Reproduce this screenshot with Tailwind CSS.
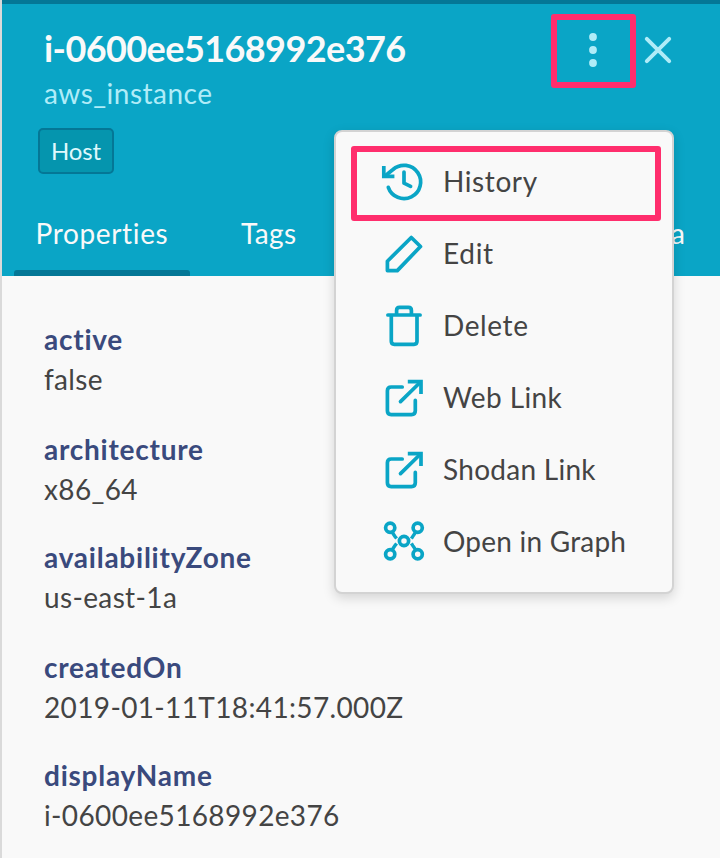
<!DOCTYPE html>
<html lang="en">
<head>
<meta charset="utf-8">
<title>aws_instance</title>
<script src="https://cdn.jsdelivr.net/npm/@tailwindcss/browser@4"></script>
</head>
<body class="w-[720px] h-[858px] overflow-hidden bg-[#f9f9f9] font-['Lato',sans-serif] text-[28px] leading-[40px] tracking-[0.36px] text-[#444]">
<div class="relative h-[858px] border-l-2 border-[#dadada] flex flex-col">
  <header class="h-[276px] shrink-0 bg-[#0aa5c6] border-t-4 border-[#047796] flex flex-col">
    <div class="h-[120px] flex justify-between pl-[42px] pr-[48px] pt-[22px]">
      <div>
        <h1 class="text-[36px] leading-[44px] tracking-[-0.58px] font-bold text-[#f9f9f9]">i-0600ee5168992e376</h1>
        <p class="mt-px leading-[44px] tracking-[0.48px] text-[#b0ecf8]">aws_instance</p>
      </div>
      <div class="flex gap-[45px] items-start pt-[8px]">
        <svg class="w-[12px] h-[36px] mt-[-2px]" viewBox="0 0 12 36" fill="#b0ecf8"><circle cx="6" cy="5" r="3.9"/><circle cx="6" cy="18" r="3.9"/><circle cx="6" cy="31" r="3.9"/></svg>
        <svg class="w-[28px] h-[28px] mt-[2px]" viewBox="0 0 28 28" fill="none" stroke="#b0ecf8" stroke-width="3.9" stroke-linecap="round"><path d="M2.8 2.8 25.2 25.2M25.2 2.8 2.8 25.2"/></svg>
      </div>
    </div>
    <div class="pl-[36px] pt-1"><span class="flex items-center justify-center w-[76px] h-[46px] rounded-[5px] border-2 border-[#047796] bg-[#0595ae] text-[24px] tracking-[-0.2px] text-[#dff8fc]">Host</span></div>
    <nav class="mt-auto h-[72px] flex pl-3 text-[#f9f9f9] leading-[58px]">
      <div class="w-[176px] pl-[21.5px] tracking-[0.65px] relative">
        <span>Properties</span>
        <div class="absolute left-0 bottom-0 w-full h-[6px] rounded-t-[3px] bg-[#047796]"></div>
      </div>
      <div class="pl-[51px] w-[481px]">Tags</div>
      <div>a</div>
    </nav>
  </header>
  <dl class="pl-[42px] pt-[43px]">
    <dt class="font-bold tracking-[0.76px] text-[#3a4a7d]">active</dt><dd class="mb-[30px]">false</dd>
    <dt class="font-bold tracking-[0.76px] text-[#3a4a7d]">architecture</dt><dd class="mb-[28px]">x86_64</dd>
    <dt class="font-bold tracking-[0.76px] text-[#3a4a7d]">availabilityZone</dt><dd class="mb-[30px]">us-east-1a</dd>
    <dt class="font-bold tracking-[0.76px] text-[#3a4a7d]">createdOn</dt><dd class="mb-[28px]">2019-01-11T18:41:57.000Z</dd>
    <dt class="font-bold tracking-[0.76px] text-[#3a4a7d]">displayName</dt><dd>i-0600ee5168992e376</dd>
  </dl>
</div>

<div class="absolute left-[334px] top-[130px] w-[340px] h-[464px] rounded-[8px] border-2 border-[#d3d3d3] bg-[#f9f9f9] shadow-[0_4px_12px_rgba(0,0,0,0.15)] py-[14px]">
  <ul class="tracking-[0.28px]">
    <li class="h-[72px] flex items-center pl-[44px] gap-[15px]">
      <svg class="w-12 h-12 overflow-visible" viewBox="0 0 48 48" fill="none" stroke="#0aa5c6" stroke-width="3.7" stroke-linecap="round" stroke-linejoin="round"><path d="M8.3 29.3A16.6 16.6 0 1 0 13 11.5L5 18"/><path stroke-linejoin="miter" stroke-linecap="butt" d="M3.8 8V18.4H14.4"/><path d="M24 14V25.2L30.6 28.4"/></svg>
      <span class="pb-[2px] tracking-[0.6px]">History</span>
    </li>
    <li class="h-[72px] flex items-center pl-[44px] gap-[15px]">
      <svg class="w-12 h-12" viewBox="0 0 48 48" fill="none" stroke="#0aa5c6" stroke-width="3.7" stroke-linejoin="round"><path d="M31.3 7.5 40.5 16.5 17.3 40.6H7.4V31.2Z"/></svg>
      <span class="pb-[2px] tracking-[0.7px]">Edit</span>
    </li>
    <li class="h-[72px] flex items-center pl-[44px] gap-[15px]">
      <svg class="w-12 h-12" viewBox="0 0 48 48" fill="none" stroke="#0aa5c6" stroke-width="3.7" stroke-linecap="round"><path d="M7.9 13H40.1M16.6 13V8.4Q16.6 5.4 19.6 5.4H28.4Q31.4 5.4 31.4 8.4V13M11.3 13V39.3Q11.3 42.3 14.3 42.3H34Q37 42.3 37 39.3V13"/></svg>
      <span class="pb-[2px] tracking-[0.6px]">Delete</span>
    </li>
    <li class="h-[72px] flex items-center pl-[44px] gap-[15px]">
      <svg class="w-12 h-12" viewBox="0 0 48 48" fill="none" stroke="#0aa5c6" stroke-width="3.7" stroke-linecap="round"><path d="M22.2 13H11.2Q7.4 13 7.4 16.8V36.8Q7.4 40.6 11.2 40.6H31.5Q35.3 40.6 35.3 36.8V26.4M20.5 27.6 40 8.5"/><path stroke-linecap="butt" d="M27.8 7.6H41V20"/></svg>
      <span class="pb-[2px] tracking-[0.4px]">Web Link</span>
    </li>
    <li class="h-[72px] flex items-center pl-[44px] gap-[15px]">
      <svg class="w-12 h-12" viewBox="0 0 48 48" fill="none" stroke="#0aa5c6" stroke-width="3.7" stroke-linecap="round"><path d="M22.2 13H11.2Q7.4 13 7.4 16.8V36.8Q7.4 40.6 11.2 40.6H31.5Q35.3 40.6 35.3 36.8V26.4M20.5 27.6 40 8.5"/><path stroke-linecap="butt" d="M27.8 7.6H41V20"/></svg>
      <span class="pb-[2px]">Shodan Link</span>
    </li>
    <li class="h-[72px] flex items-center pl-[44px] gap-[15px]">
      <svg class="w-12 h-12" viewBox="0 0 48 48" fill="none" stroke="#0aa5c6" stroke-width="3.7"><circle cx="24" cy="23" r="4.6"/><circle cx="10.2" cy="9.7" r="4.6"/><circle cx="37.7" cy="9.7" r="4.6"/><circle cx="10.2" cy="36.2" r="4.6"/><circle cx="37.7" cy="36.2" r="4.6"/><path stroke-width="3.4" d="M12 14 15 18.4 16.6 20.6M35.8 14 32.8 18.4 31.4 20.6M12 32 15 27.6 16.6 25.4M35.8 32 32.8 27.6 31.4 25.4"/></svg>
      <span class="pb-[2px] tracking-[0.22px]">Open in Graph</span>
    </li>
  </ul>
</div>

<div class="absolute left-[550.5px] top-[14px] w-[85.5px] h-[74px] border-[6px] border-[#ff2e6d] rounded-[3px]"></div>
<div class="absolute left-[351px] top-[146px] w-[310px] h-[74.5px] border-[6px] border-[#ff2e6d] rounded-[3px]"></div>
</body>
</html>
